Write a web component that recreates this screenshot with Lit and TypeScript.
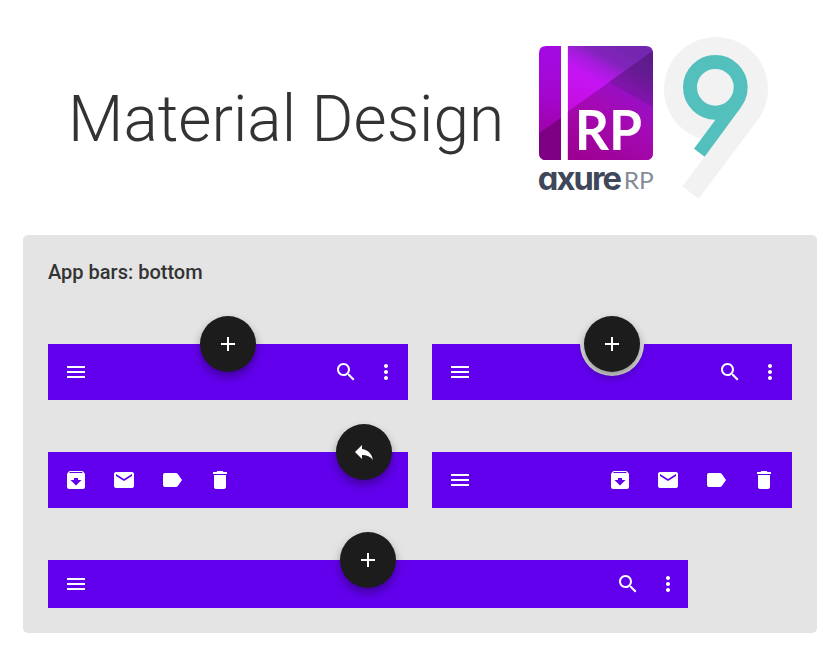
import { LitElement, html, css, svg } from "lit";
import { customElement, property } from "lit/decorators.js";

const ICONS: Record<string, string> = {
  menu: "M3 18h18v-2H3v2zm0-5h18v-2H3v2zm0-7v2h18V6H3z",
  search:
    "M15.5 14h-.79l-.28-.27C15.41 12.59 16 11.11 16 9.5 16 5.91 13.09 3 9.5 3S3 5.91 3 9.5 5.91 16 9.5 16c1.61 0 3.09-.59 4.23-1.57l.27.28v.79l5 4.99L20.49 19l-4.99-5zm-6 0C7.01 14 5 11.99 5 9.5S7.01 5 9.5 5 14 7.01 14 9.5 11.99 14 9.5 14z",
  more: "M12 8c1.1 0 2-.9 2-2s-.9-2-2-2-2 .9-2 2 .9 2 2 2zm0 2c-1.1 0-2 .9-2 2s.9 2 2 2 2-.9 2-2-.9-2-2-2zm0 6c-1.1 0-2 .9-2 2s.9 2 2 2 2-.9 2-2-.9-2-2-2z",
  archive:
    "M20.54 5.23l-1.39-1.68C18.88 3.21 18.47 3 18 3H6c-.47 0-.88.21-1.16.55L3.46 5.23C3.17 5.57 3 6.02 3 6.5V19c0 1.1.9 2 2 2h14c1.1 0 2-.9 2-2V6.5c0-.48-.17-.93-.46-1.27zM12 17.5L6.5 12H10v-2h4v2h3.5L12 17.5zM5.12 5l.81-1h12l.94 1H5.12z",
  mail: "M20 4H4c-1.1 0-1.99.9-1.99 2L2 18c0 1.1.9 2 2 2h16c1.1 0 2-.9 2-2V6c0-1.1-.9-2-2-2zm0 4l-8 5-8-5V6l8 5 8-5v2z",
  label:
    "M17.63 5.84C17.27 5.33 16.67 5 16 5L5 5.01C3.9 5.01 3 5.9 3 7v10c0 1.1.9 1.99 2 1.99L16 19c.67 0 1.27-.33 1.63-.84L22 12l-4.37-6.16z",
  trash: "M6 19c0 1.1.9 2 2 2h8c1.1 0 2-.9 2-2V7H6v12zM19 4h-3.5l-1-1h-5l-1 1H5v2h14V4z",
  add: "M19 13h-6v6h-2v-6H5v-2h6V5h2v6h6v2z",
  reply: "M10 9V5l-7 7 7 7v-4.1c5 0 8.5 1.6 11 5.1-1-5-4-10-11-11z",
};

@customElement("md-icon")
class MdIcon extends LitElement {
  @property() name = "menu";
  static styles = css`
    :host { display: block; width: 24px; height: 24px; }
    .glyph { display: block; width: 24px; height: 24px; fill: #fff; }
  `;
  render() {
    return html`<svg class="glyph" viewBox="0 0 24 24"><path d=${ICONS[this.name]}></path></svg>`;
  }
}

@customElement("md-fab")
class MdFab extends LitElement {
  @property() icon = "add";
  static styles = css`
    :host {
      display: flex; align-items: center; justify-content: center;
      width: 56px; height: 56px; border-radius: 50%; background: #1c1c1c;
      box-shadow: 0 5px 10px rgba(0, 0, 0, 0.35);
    }
  `;
  render() {
    return html`<md-icon name=${this.icon}></md-icon>`;
  }
}

@customElement("bottom-bar")
class BottomBar extends LitElement {
  @property({ attribute: false }) left: string[] = [];
  @property({ attribute: false }) right: string[] = [];
  @property() fab = "";
  @property({ reflect: true }) place = "center";
  @property({ type: Boolean, reflect: true }) notch = false;
  @property({ type: Boolean, reflect: true }) dense = false;
  static styles = css`
    :host { display: block; position: relative; height: 56px; }
    :host([dense]) { height: 48px; }
    .bar {
      display: flex; align-items: center; justify-content: space-between;
      height: 100%; box-sizing: border-box; padding: 0 16px; background: #6200ee;
    }
    .group { display: flex; gap: 24px; }
    .tight { gap: 16px; margin-right: -6px; }
    :host([dense]) .tight { margin-right: -8px; }
    .fab { position: absolute; top: -28px; left: calc(50% - 28px); }
    :host([place="end"]) .fab { left: auto; right: 16px; }
    .cut {
      position: absolute; top: 0; left: calc(50% - 32px); width: 64px; height: 32px;
      border-radius: 0 0 32px 32px; background: #e4e4e4;
    }
  `;
  render() {
    const icons = (names: string[]) => names.map((n) => html`<md-icon name=${n}></md-icon>`);
    const tight = this.right.includes("more") ? "tight" : "";
    return html`
      <div class="bar">
        <div class="group">${icons(this.left)}</div>
        <div class="group ${tight}">${icons(this.right)}</div>
      </div>
      ${this.notch ? html`<div class="cut"></div>` : ""}
      ${this.fab ? html`<md-fab class="fab" icon=${this.fab}></md-fab>` : ""}
    `;
  }
}

@customElement("brand-logo")
class BrandLogo extends LitElement {
  static styles = css`
    :host { display: block; }
    .art { display: block; width: 250px; height: 180px; }
    .tile-text { font: 700 165px Lato, sans-serif; fill: #fff; }
    .axure { font: 700 98px Inter, sans-serif; font-feature-settings: "cv11"; fill: #3f475a; }
    .rp { font: 400 71px Lato, sans-serif; fill: #858a98; }
  `;
  render() {
    return html`<svg class="art" viewBox="0 0 750 540">
      ${svg`
      <defs>
        <clipPath id="tile"><path d="M49 48H93V390H49Q27 390 27 368V70Q27 48 49 48ZM113 48H347Q369 48 369 70V368Q369 390 347 390H113Z"/></clipPath>
        <linearGradient id="upper" gradientUnits="userSpaceOnUse" x1="130" y1="260" x2="254" y2="40">
          <stop offset="0" stop-color="#c80cdc"/><stop offset=".5" stop-color="#c414f4"/><stop offset=".68" stop-color="#a51cdc"/><stop offset=".8" stop-color="#8323bb"/><stop offset="1" stop-color="#7526b0"/>
        </linearGradient>
        <linearGradient id="lower" gradientUnits="userSpaceOnUse" x1="150" y1="390" x2="270" y2="170">
          <stop offset="0" stop-color="#9d0091"/><stop offset=".65" stop-color="#a40ab4"/><stop offset="1" stop-color="#980fc4"/>
        </linearGradient>
        <linearGradient id="shade" gradientUnits="userSpaceOnUse" x1="360" y1="80" x2="302" y2="180">
          <stop offset="0" stop-color="#5a1d88"/><stop offset=".5" stop-color="#651b92"/><stop offset="1" stop-color="#8014aa"/>
        </linearGradient>
        <linearGradient id="spine" gradientUnits="userSpaceOnUse" x1="70" y1="80" x2="40" y2="330">
          <stop offset="0" stop-color="#a30ae0"/><stop offset=".5" stop-color="#a306cc"/><stop offset="1" stop-color="#9e00a0"/>
        </linearGradient>
      </defs>
      <g clip-path="url(#tile)">
        <rect x="113" y="48" width="256" height="342" fill="url(#upper)"/>
        <path d="M113 245L369 62V390H113Z" fill="url(#lower)"/>
        <path d="M236 157L369 62V232Z" fill="url(#shade)"/>
        <rect x="27" y="48" width="66" height="342" fill="url(#spine)"/>
        <path d="M27 310L93 263V390H27Z" fill="#7d0084"/>
      </g>
      <text class="tile-text" x="134" y="360" textLength="202" lengthAdjust="spacingAndGlyphs">RP</text>
      <text class="axure" x="23" y="479" textLength="253" lengthAdjust="spacing">axure</text>
      <text class="rp" x="281" y="478" textLength="90" lengthAdjust="spacingAndGlyphs">RP</text>
      <g fill="#f2f2f2"><circle cx="558" cy="177" r="156"/><path d="M457 469L506 506L683 270L600 279Z"/></g>
      <circle cx="556" cy="172" r="76" fill="none" stroke="#54c0bd" stroke-width="42"/>
      <path d="M492 356L524 380L634 230L562 262Z" fill="#54c0bd"/>
      `}
    </svg>`;
  }
}

@customElement("app-root")
class AppRoot extends LitElement {
  static styles = css`
    :host { display: block; height: 646px; box-sizing: border-box; background: #fff; font-family: Roboto, sans-serif; color: #333; overflow: hidden; }
    .head { display: flex; height: 235px; box-sizing: border-box; padding: 30px 60px 0 68px; justify-content: space-between; }
    .title { margin: 0; padding-top: 52px; font-size: 64px; line-height: 76px; font-weight: 300; white-space: nowrap; }
    .panel { margin: 0 23px; height: 398px; box-sizing: border-box; padding: 25px; border-radius: 5px; background: #e4e4e4; }
    .name { margin: 0 0 60px; font-size: 20px; line-height: 24px; font-weight: 500; }
    .grid { display: grid; grid-template-columns: 360px 360px; gap: 52px 24px; }
    .wide { grid-column: 1 / -1; width: 640px; }
  `;
  render() {
    const mail = ["archive", "mail", "label", "trash"];
    const tools = ["search", "more"];
    return html`
      <header class="head">
        <h1 class="title">Material Design</h1>
        <brand-logo></brand-logo>
      </header>
      <section class="panel">
        <h2 class="name">App bars: bottom</h2>
        <div class="grid">
          <bottom-bar .left=${["menu"]} .right=${tools} fab="add"></bottom-bar>
          <bottom-bar .left=${["menu"]} .right=${tools} fab="add" notch></bottom-bar>
          <bottom-bar .left=${mail} fab="reply" place="end"></bottom-bar>
          <bottom-bar .left=${["menu"]} .right=${mail}></bottom-bar>
          <bottom-bar class="wide" .left=${["menu"]} .right=${tools} fab="add" dense></bottom-bar>
        </div>
      </section>
    `;
  }
}
